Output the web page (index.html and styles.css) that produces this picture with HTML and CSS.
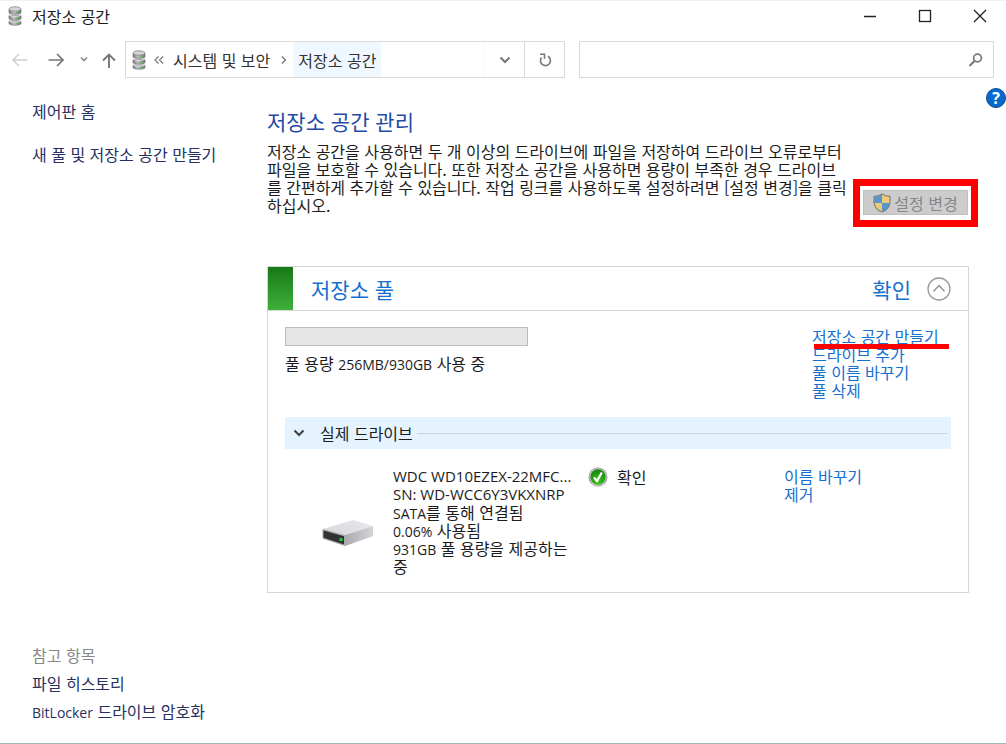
FILE: index.html
```html
<!DOCTYPE html>
<html lang="ko">
<head>
	<meta charset="UTF-8">
	<title>저장소 공간</title>
	<link rel="stylesheet" href="styles.css">
</head>

<body>
	<svg class="defs" width="0" height="0" aria-hidden="true">
		<defs>
			<linearGradient id="disk" x1="0" x2="1" y1="0" y2="0">
				<stop offset="0" stop-color="#77777c"/>
				<stop offset="0.4" stop-color="#c4c4ca"/>
				<stop offset="1" stop-color="#707076"/>
			</linearGradient>
			<linearGradient id="drive-top" x1="0" x2="1" y1="1" y2="0">
				<stop offset="0" stop-color="#d2d3d7"/>
				<stop offset="1" stop-color="#e8e8ec"/>
			</linearGradient>
			<linearGradient id="drive-side" x1="0" x2="1" y1="0" y2="0">
				<stop offset="0" stop-color="#a9abaf"/>
				<stop offset="1" stop-color="#d3d4d8"/>
			</linearGradient>
			<radialGradient id="ok-fill" cx="0.5" cy="0.75" r="0.7">
				<stop offset="0" stop-color="#3cc81f"/>
				<stop offset="1" stop-color="#178411"/>
			</radialGradient>
			<symbol id="disks" viewBox="0 0 14 20">
				<path d="M1 3.500v3.200c0 2.100 12 2.100 12 0V3.500z" fill="url(#disk)" stroke="#77777d" stroke-width="0.700"/>
				<path d="M1 9.300v3.200c0 2.100 12 2.100 12 0V9.300z" fill="url(#disk)" stroke="#77777d" stroke-width="0.700"/>
				<path d="M1 15v2.500c0 2.300 12 2.300 12 0V15z" fill="url(#disk)" stroke="#77777d" stroke-width="0.700"/>
				<ellipse cx="7" cy="3" rx="6" ry="2.200" fill="#d5d5da" stroke="#85858b" stroke-width="0.8"/>
				<path d="M1 9c1 1.700 11 1.700 12 0M1 14.800c1 1.700 11 1.700 12 0" fill="none" stroke="#e4e4e8"/>
				<path d="M8.500 6.400h2.500M8.500 12.200h2.500M8.500 17.500h2.500" stroke="#52c43d" stroke-width="1.200"/>
			</symbol>
		</defs>
	</svg>

	<header class="titlebar">
		<svg class="disks" width="14" height="20"><use href="#disks"/></svg>
		<span class="window-title">저장소 공간</span>
		<div class="window-buttons">
			<button aria-label="최소화"><svg width="14" height="14"><path d="M1 7.500h12" stroke="#222" stroke-width="1.500"/></svg></button>
			<button aria-label="최대화"><svg width="14" height="14"><rect x="1.500" y="1.500" width="11" height="11" fill="none" stroke="#222" stroke-width="1.300"/></svg></button>
			<button aria-label="닫기"><svg width="14" height="14"><path d="M1 1l12 12M13 1L1 13" stroke="#222" stroke-width="1.300"/></svg></button>
		</div>
	</header>

	<nav class="toolbar">
		<div class="history">
			<button aria-label="뒤로"><svg width="16" height="16"><path d="M15.500 8H1M7 2L1 8l6 6" fill="none" stroke="#d0d0d0" stroke-width="1.500"/></svg></button>
			<button aria-label="앞으로"><svg width="16" height="16"><path d="M0.500 8H15M9 2l6 6-6 6" fill="none" stroke="#777" stroke-width="1.700"/></svg></button>
			<button aria-label="최근 위치"><svg width="8" height="16"><path d="M1 5.500l3 3 3-3" fill="none" stroke="#888" stroke-width="1.600"/></svg></button>
			<button aria-label="위로"><svg width="14" height="16"><path d="M7 16V2.500M1 8.500l6-6 6 6" fill="none" stroke="#777" stroke-width="1.900"/></svg></button>
		</div>
		<div class="address">
			<svg class="disks" width="14" height="20"><use href="#disks"/></svg>
			<svg class="crumb-back" width="10" height="10"><path d="M4.500 1.500L1 5l3.500 3.500M9 1.500L5.500 5 9 8.500" fill="none" stroke="#777" stroke-width="1.200"/></svg>
			<a class="crumb" href="#">시스템 및 보안</a>
			<svg class="crumb-sep" width="6" height="10"><path d="M1 1.500L4.500 5 1 8.500" fill="none" stroke="#777" stroke-width="1.400"/></svg>
			<a class="crumb current" href="#">저장소 공간</a>
			<button class="address-button drop" aria-label="이전 위치"><svg width="12" height="10"><path d="M1.500 2.500L6 7l4.500-4.500" fill="none" stroke="#777" stroke-width="2"/></svg></button>
			<button class="address-button" aria-label="새로 고침"><svg width="14" height="16"><path d="M10 4.300a5 5 0 1 1-6.500 1.200M2 2.200h4.500v4.500" fill="none" stroke="#777" stroke-width="1.600"/></svg></button>
		</div>
		<div class="search">
			<input type="text" aria-label="검색">
			<svg width="16" height="16"><circle cx="9.500" cy="6" r="3.900" fill="none" stroke="#777" stroke-width="1.700"/><path d="M6.700 8.800L1.500 14" stroke="#777" stroke-width="2"/></svg>
		</div>
	</nav>

	<button class="help" aria-label="도움말">?</button>

	<div class="page">
		<aside class="sidebar">
			<a href="#">제어판 홈</a>
			<a href="#">새 풀 및 저장소 공간 만들기</a>
			<div class="see-also">
				<div class="see-also-title">참고 항목</div>
				<a href="#">파일 히스토리</a>
				<a href="#"><span class="latin">BitLocker</span> 드라이브 암호화</a>
			</div>
		</aside>

		<main>
			<h1>저장소 공간 관리</h1>
			<div class="intro">
				<p>저장소 공간을 사용하면 두 개 이상의 드라이브에 파일을 저장하여 드라이브 오류로부터 파일을 보호할 수 있습니다. 또한 저장소 공간을 사용하면 용량이 부족한 경우 드라이브를 간편하게 추가할 수 있습니다. 작업 링크를 사용하도록 설정하려면 [설정 변경]을 클릭하십시오.</p>
				<div class="marked-box">
					<button class="change" disabled>
						<svg width="18" height="20" viewBox="0 0 18 20">
							<path d="M9 1C6.500 2.600 4 3.300 1 3.500V10h8z" fill="#5797cf"/>
							<path d="M9 1c2.500 1.600 5 2.300 8 2.500V10H9z" fill="#edca76"/>
							<path d="M1 10c.5 4.300 4 7.500 8 9v-9z" fill="#edca76"/>
							<path d="M17 10c-.5 4.300-4 7.500-8 9v-9z" fill="#5797cf"/>
							<path d="M9 1C6.500 2.600 4 3.300 1 3.500V9c0 5 4 8.500 8 10 4-1.500 8-5 8-10V3.500C14 3.300 11.500 2.600 9 1z" fill="none" stroke="#858585" stroke-width="1.300"/>
						</svg>
						설정 변경
					</button>
				</div>
			</div>

			<section class="pool">
				<div class="pool-header">
					<div class="pool-state"></div>
					<h2>저장소 풀</h2>
					<span class="pool-status">확인</span>
					<button aria-label="접기"><svg width="24" height="24"><circle cx="12" cy="12" r="11" fill="none" stroke="#999" stroke-width="1.300"/><path d="M6.500 14.200L12 8.700l5.500 5.500" fill="none" stroke="#999" stroke-width="1.600"/></svg></button>
				</div>
				<div class="pool-body">
					<div class="pool-summary">
						<div class="usage">
							<div class="usage-bar"></div>
							<div>풀 용량 <span class="latin">256MB/930GB</span> 사용 중</div>
						</div>
						<div class="pool-actions">
							<a class="marked-line" href="#">저장소 공간 만들기</a>
							<a href="#">드라이브 추가</a>
							<a href="#">풀 이름 바꾸기</a>
							<a href="#">풀 삭제</a>
						</div>
					</div>

					<button class="drives-header">
						<svg width="12" height="10"><path d="M1.500 2.500L6 7l4.500-4.500" fill="none" stroke="#444" stroke-width="2.200"/></svg>
						<span>실제 드라이브</span>
						<span class="rule"></span>
					</button>

					<div class="drive">
						<div class="drive-icon">
							<svg width="52" height="28" viewBox="0 0 52 28">
								<path d="M1 10L31 1l20 6v10L23 27 1 20z" fill="url(#drive-top)"/>
								<path d="M23 16L51 7.500V17L23 27z" fill="url(#drive-side)"/>
								<path d="M.5 10L23 16v11L.5 19.500z" fill="#aaa"/>
								<path d="M1.500 11.500L22 17.200v8.300L1.500 18.800z" fill="#303233"/>
								<rect x="17.500" y="19" width="3" height="3" fill="#20d030"/>
							</svg>
						</div>
						<div class="drive-info">
							<div class="drive-id">WDC WD10EZEX-22MFC...</div>
							<div class="drive-id">SN: WD-WCC6Y3VKXNRP</div>
							<div><span class="latin">SATA</span>를 통해 연결됨</div>
							<div><span class="latin">0.06%</span> 사용됨</div>
							<div><span class="latin">931GB</span> 풀 용량을 제공하는 중</div>
						</div>
						<div class="drive-status">
							<svg width="20" height="20"><circle cx="10" cy="10" r="9.500" fill="#8d938d"/><circle cx="10" cy="10" r="8.700" fill="#d2d6d2"/><circle cx="10" cy="10" r="7.700" fill="url(#ok-fill)"/><path d="M6 10.500L9 14l4.800-8.500" fill="none" stroke="#fff" stroke-width="2.200"/></svg>
							<span>확인</span>
						</div>
						<div class="drive-actions">
							<a href="#">이름 바꾸기</a>
							<a href="#">제거</a>
						</div>
					</div>
				</div>
			</section>
		</main>
	</div>
</body>
</html>
```

FILE: styles.css
```css
* {
	box-sizing: border-box;
}

body {
	margin: 0;
	min-height: 100vh;
	display: flex;
	flex-flow: column;
	position: relative;
	background-color: #fff;
	border-bottom: 1px solid #a3b8b8;
	color: #1c1c1c;
	font-family: "Noto Sans CJK KR", sans-serif;
	font-size: 16px;
	line-height: 18px;
}

a {
	color: #1670cf;
	text-decoration: none;
}

button {
	font: inherit;
	color: inherit;
	background: none;
	border: 0;
	padding: 0;
}

svg {
	display: block;
	flex: none;
}

.defs {
	position: absolute;
}

/* western text runs a little smaller than the hangul */
.latin {
	font-family: "Open Sans", sans-serif;
	font-size: 14px;
	line-height: 1;
}

.titlebar {
	display: flex;
	align-items: center;
	height: 32px;
	padding: 0 0 1px 8px;
	border-top: 1px solid #f0f0f0;
}

.window-title {
	margin-left: 10px;
}

.window-buttons {
	display: flex;
	gap: 41px;
	margin-left: auto;
	padding-right: 19px;
}

.toolbar {
	display: flex;
	align-items: center;
	margin-top: 9px;
	padding: 0 12px;
}

.history {
	display: flex;
	align-items: center;
	gap: 16px;
	width: 113px;
}

.history button:first-child {
	margin-right: 4px;
}

.history button:last-child {
	margin-left: -2px;
}

.address {
	display: flex;
	align-items: center;
	flex: 442;
	height: 37px;
	padding-left: 6px;
	border: 1px solid #d9d9d9;
}

.crumb-back {
	margin: 0 9px 0 8px;
}

.crumb {
	color: #333;
}

.crumb-sep {
	margin: 0 6px 0 11px;
}

.crumb.current {
	align-self: stretch;
	display: flex;
	align-items: center;
	padding: 0 5px;
	background-color: #f0f8ff;
}

.address-button {
	display: flex;
	align-items: center;
	justify-content: center;
	align-self: stretch;
	width: 40px;
	border-left: 1px solid #d9d9d9;
}

.address-button.drop {
	margin-left: auto;
	border-left-color: #f7f7f7;
}

.search {
	display: flex;
	align-items: center;
	flex: 413;
	height: 37px;
	margin-left: 14px;
	padding-right: 9px;
	border: 1px solid #d9d9d9;
}

.search input {
	flex: 1;
	min-width: 0;
	height: 100%;
	border: 0;
	outline: 0;
	font: inherit;
}

.help {
	position: absolute;
	top: 88px;
	right: 0;
	width: 20px;
	height: 20px;
	border: 1px solid #0b4d90;
	border-radius: 50%;
	background-color: #0669cc;
	color: #fff;
	font-family: "Open Sans", sans-serif;
	font-size: 16px;
	font-weight: bold;
	line-height: 18px;
}

.page {
	display: flex;
	flex: 1;
	padding: 24px 37px 23px 32px;
}

.sidebar {
	display: flex;
	flex-flow: column;
	gap: 25px;
	width: 235px;
}

.sidebar a {
	color: #27305f;
}

.see-also {
	display: flex;
	flex-flow: column;
	gap: 10px;
	margin-top: auto;
}

.see-also-title {
	color: #888;
}

main {
	flex: 1;
	min-width: 0;
	padding-top: 4px;
}

h1,
h2 {
	margin: 0;
	font-size: 21px;
	font-weight: normal;
	line-height: 30px;
}

h1 {
	color: #1f4aa6;
}

.intro {
	display: flex;
	align-items: flex-start;
	justify-content: space-between;
	margin-top: 6px;
}

.intro p {
	max-width: 582px;
	margin: 0;
}

.marked-box {
	flex: none;
	margin: 37px -9px 0 0;
	padding: 4px 3px 5px;
	border: 7px solid #f00;
}

.change {
	display: flex;
	align-items: center;
	justify-content: center;
	gap: 3px;
	width: 105px;
	height: 25px;
	border: 1px solid #bfbfbf;
	background-color: #ccc;
	color: #868686;
}

.pool {
	margin-top: 39px;
	border: 1px solid #d6d6d6;
}

.pool-header {
	display: flex;
	align-items: center;
	height: 44px;
	padding-right: 17px;
	border-bottom: 1px solid #d6d6d6;
	color: #1670cf;
}

.pool-state {
	align-self: stretch;
	width: 25px;
	margin-right: 18px;
	background: linear-gradient(#187818, #3fb03b);
}

.pool-status {
	margin-left: auto;
	margin-right: 16px;
	font-size: 21px;
}

.pool-body {
	padding: 16px 17px 17px;
}

.pool-summary {
	display: flex;
	justify-content: space-between;
}

.usage-bar {
	width: 243px;
	height: 19px;
	margin-bottom: 8px;
	border: 1px solid #bcbcbc;
	background-color: #e6e6e6;
}

.pool-actions,
.drive-actions {
	display: flex;
	flex-flow: column;
	align-items: flex-start;
}

.pool-actions {
	width: 139px;
}

.marked-line {
	position: relative;
}

.marked-line::after {
	content: "";
	position: absolute;
	left: 2px;
	top: 17px;
	width: 135px;
	height: 5px;
	background-color: #f00;
}

.drives-header {
	display: flex;
	align-items: center;
	width: 100%;
	height: 32px;
	margin-top: 18px;
	padding: 0 4px 0 8px;
	background-color: #e5f3ff;
}

.drives-header svg {
	margin-right: 15px;
}

.rule {
	flex: 1;
	height: 1px;
	margin-left: 4px;
	background-color: #cfd3d8;
}

.drive {
	display: flex;
	padding-top: 18px;
}

.drive-icon {
	width: 108px;
	padding: 52px 0 0 37px;
}

.drive-info {
	width: 178px;
	word-break: keep-all;
}

.drive-id {
	font-family: "Open Sans", sans-serif;
	font-size: 15px;
	white-space: nowrap;
}

.drive-status {
	display: flex;
	align-items: center;
	align-self: flex-start;
	gap: 9px;
	margin-left: 17px;
}

.drive-actions {
	width: 167px;
	margin-left: auto;
}
```
